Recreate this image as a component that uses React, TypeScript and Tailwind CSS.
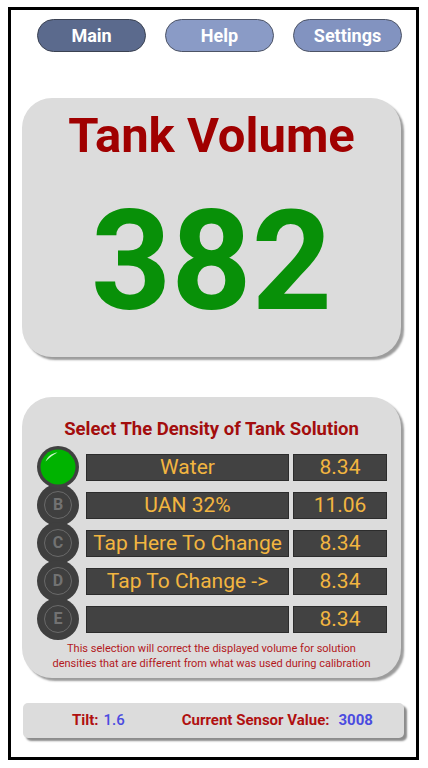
import React from "react";

type Row = {
  letter: string;
  name: string;
  value: string;
};

const rows: Row[] = [
  { letter: "A", name: "Water", value: "8.34" },
  { letter: "B", name: "UAN 32%", value: "11.06" },
  { letter: "C", name: "Tap Here To Change", value: "8.34" },
  { letter: "D", name: "Tap To Change ->", value: "8.34" },
  { letter: "E", name: "", value: "8.34" },
];

function SelectedDot() {
  return (
    <svg width="42" height="42" viewBox="0 0 42 42" className="shrink-0 relative z-10">
      <circle cx="21" cy="21" r="21" fill="#414141" />
      <circle cx="21" cy="21" r="17.5" fill="#00b300" />
      <path
        d="M8.5 15.5 C 10.5 10.5, 15 7, 20.5 6.5 C 16.5 8.5, 12.5 11.5, 8.5 15.5 Z"
        fill="#c8f5c8"
      />
    </svg>
  );
}

function LetterDot({ letter }: { letter: string }) {
  return (
    <div className="relative w-[42px] h-[42px] shrink-0 rounded-full bg-[#3f3f3f] flex items-center justify-center">
      <div className="w-[28px] h-[28px] rounded-full border-[1.5px] border-[#6a6a6a] flex items-center justify-center text-[16px] font-bold text-[#727272] leading-none">
        {letter}
      </div>
    </div>
  );
}

export default function App() {
  return (
    <div className="w-[428px] h-[768px] bg-white font-['Roboto',sans-serif] pt-[7px] pl-[8px]">
      <div className="w-[411px] h-[753px] border-[3px] border-black flex flex-col">
        {/* nav */}
        <div className="flex pl-[26px] pt-[9px] gap-[19px]">
          <button className="w-[109px] h-[33px] rounded-full bg-[#5b6a8d] border-[1.5px] border-[#3b4252] text-white text-[18px] font-bold">
            Main
          </button>
          <button className="w-[109px] h-[33px] rounded-full bg-[#8a9bc6] border-[1.5px] border-[#4d5466] text-white text-[18px] font-bold">
            Help
          </button>
          <button className="w-[109px] h-[33px] rounded-full bg-[#8293c0] border-[1.5px] border-[#4d5466] text-white text-[18px] font-bold">
            Settings
          </button>
        </div>

        {/* tank volume */}
        <div className="ml-[11px] mt-[46px] w-[379px] h-[259px] rounded-[30px] bg-[#dcdcdc] shadow-[3px_3px_2px_#9c9c9c] flex flex-col items-center">
          <div className="mt-[8px] text-[49px] font-bold text-[#a00000] leading-[60px]">Tank Volume</div>
          <div className="mt-[20px] text-[140px] font-bold text-[#089008] leading-[150px]">382</div>
        </div>

        {/* density */}
        <div className="ml-[11px] mt-[40px] w-[379px] h-[281px] rounded-[30px] bg-[#dcdcdc] shadow-[3px_3px_2px_#9c9c9c] flex flex-col">
          <div className="mt-[21px] text-center text-[18.5px] font-bold text-[#a30d0d] leading-[22px] whitespace-nowrap">
            Select The Density of Tank Solution
          </div>
          <div className="mt-[8px] pl-[15px] flex flex-col">
            {rows.map((r, i) => (
              <div key={r.letter} className="h-[38px] flex items-center">
                {i === 0 ? <SelectedDot /> : <LetterDot letter={r.letter} />}
                <div className="ml-[7px] w-[203px] h-[27px] bg-[#424242] border border-[#2c2c2c] flex items-center justify-center text-[21px] text-[#f2b540] leading-none whitespace-nowrap">
                  {r.name}
                </div>
                <div className="ml-[4px] w-[94px] h-[27px] bg-[#424242] border border-[#2c2c2c] flex items-center justify-center text-[21px] text-[#f2b540] leading-none">
                  {r.value}
                </div>
              </div>
            ))}
          </div>
          <div className="mt-[3px] text-center text-[11px] text-[#b3191c] leading-[15px]">
            This selection will correct the displayed volume for solution
            <br />
            densities that are different from what was used during calibration
          </div>
        </div>

        {/* status bar */}
        <div className="ml-[12px] mt-[25px] w-[381px] h-[35px] rounded-[5px] bg-[#dcdcdc] shadow-[3px_3px_2px_#8c8c8c] flex items-center text-[15px] font-bold leading-none">
          <span className="ml-[49px] text-[#b01010]">Tilt:</span>
          <span className="ml-[5px] font-medium text-[#4b4be0]">1.6</span>
          <span className="ml-[57px] text-[#b01010]">Current Sensor Value:</span>
          <span className="ml-[9px] text-[#4b4be0]">3008</span>
        </div>
      </div>
    </div>
  );
}
